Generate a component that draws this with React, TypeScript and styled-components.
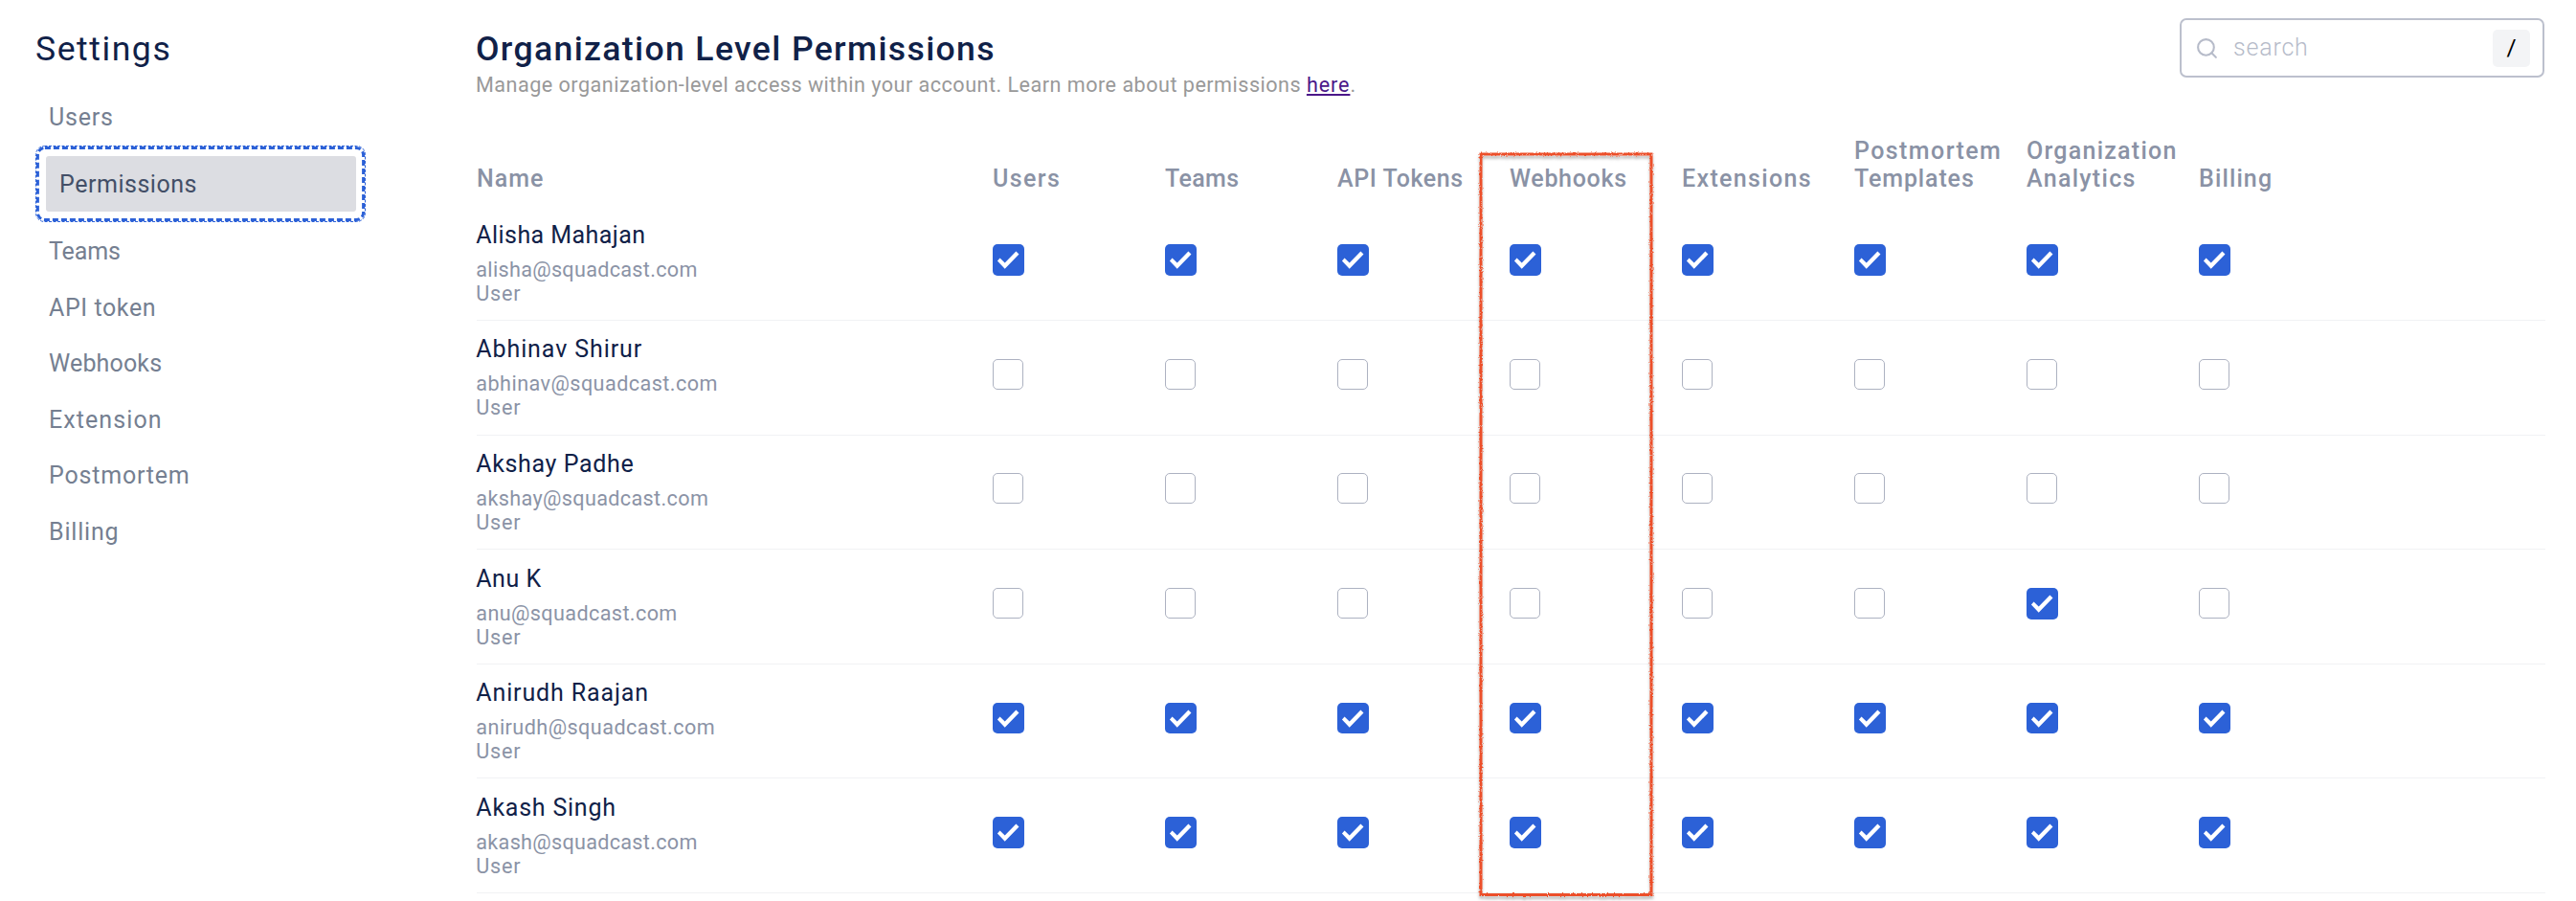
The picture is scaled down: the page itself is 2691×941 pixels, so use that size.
import React from "react";
import styled, { createGlobalStyle } from "styled-components";
import { Search } from "lucide-react";

const GlobalStyle = createGlobalStyle`
  * { box-sizing: border-box; }
  body { margin: 0; background: #fff; font-family: Roboto, "Liberation Sans", sans-serif; overflow: hidden; }
  h1, h2, p { margin: 0; }
`;

const Page = styled.div`
  display: flex;
  height: 941px;
  overflow: hidden;
`;

const Sidebar = styled.aside`
  width: 498px;
  padding: 30px 116px 0 37px;
`;

const SidebarTitle = styled.h2`
  margin-bottom: 21.3px;
  font-size: 35.6px;
  font-weight: 400;
  line-height: 42px;
  letter-spacing: 1.55px;
  color: #102148;
`;

const NavItem = styled.div<{ $tracking: number }>`
  height: 58.6px;
  padding: 0.7px 0 0 14px;
  font-size: 25px;
  line-height: 58.6px;
  letter-spacing: ${(p) => p.$tracking}px;
  color: #757f91;
`;

const ActiveFrame = styled.div`
  position: relative;
  height: 80px;
  margin-bottom: 1.4px;
  padding: 11px 10px 11px 11px;
`;

const ActiveItem = styled(NavItem)`
  height: 58px;
  border-radius: 3px;
  background: #dcdde2;
  color: #434f67;
`;

const FocusRing = styled.svg`
  position: absolute;
  inset: 0;
`;

const Main = styled.main`
  flex: 1;
  padding: 0 32px 0 0;
`;

const TopBar = styled.header`
  display: flex;
  justify-content: space-between;
  height: 102.2px;
`;

const Heading = styled.div`
  margin-left: -1px;
  padding-top: 30px;
`;

const Title = styled.h1`
  font-size: 35.6px;
  font-weight: 500;
  line-height: 42px;
  letter-spacing: 1.35px;
  color: #102148;
`;

const Subtitle = styled.p`
  margin-top: 3.2px;
  font-size: 21.6px;
  line-height: 27px;
  letter-spacing: 0.48px;
  white-space: nowrap;
  color: #999;
`;

const DocsLink = styled.a`
  letter-spacing: 0.9px;
  color: #4b1789;
  text-decoration: underline 2px;
  text-underline-offset: 2px;
`;

const SearchBox = styled.div`
  display: flex;
  align-items: center;
  width: 381px;
  height: 62px;
  margin: 19px 1px 0 0;
  padding: 0 13px 0 14px;
  border: 2px solid #bcc0cd;
  border-radius: 7px;
  color: #b6bbc9;
`;

const SearchText = styled.span`
  flex: 1;
  padding: 0 0 0 15px;
  font-size: 25px;
  font-weight: 300;
  line-height: 30px;
  letter-spacing: 0.8px;
`;

const KeyHint = styled.kbd`
  width: 39px;
  height: 39px;
  border-radius: 5px;
  background: #f3f4f6;
  font-family: inherit;
  font-size: 24.6px;
  line-height: 38px;
  text-align: center;
  color: #000;
`;

const Table = styled.section`
  position: relative;
  margin-top: 40.9px;
`;

const Row = styled.div`
  display: grid;
  grid-template-columns: 539px repeat(8, 180px);
  height: 119.6px;
  border-bottom: 1px solid #f1f2f4;
`;

const HeadRow = styled(Row)`
  align-items: end;
  height: 58px;
  margin-bottom: 14.3px;
  border: 0;
`;

const HeadCell = styled.div`
  font-size: 25px;
  font-weight: 500;
  line-height: 29px;
  color: #8a92a5;
`;

const HeadLine = styled.div<{ $tracking: number }>`
  letter-spacing: ${(p) => p.$tracking}px;
  white-space: nowrap;
`;

const Person = styled.div`
  padding-top: 15.4px;
  margin-left: -0.7px;
`;

const PersonName = styled.div<{ $tracking: number }>`
  margin-bottom: 8.1px;
  font-size: 25px;
  line-height: 30px;
  letter-spacing: ${(p) => p.$tracking}px;
  color: #102148;
`;

const PersonMeta = styled.div<{ $tracking: number }>`
  font-size: 21.6px;
  line-height: 25px;
  letter-spacing: ${(p) => p.$tracking}px;
  color: #8b93a6;
`;

const Checkbox = styled.div<{ $checked: boolean }>`
  width: ${(p) => (p.$checked ? 32.5 : 32)}px;
  height: ${(p) => (p.$checked ? 32.5 : 32)}px;
  margin-top: 39.9px;
  border: ${(p) => (p.$checked ? "0" : "1px solid #adb2c1")};
  border-radius: 5px;
  background: ${(p) => (p.$checked ? "#2c61d7" : "#fff")};

  svg { display: block; }
`;

const ColumnHighlight = styled.svg`
  position: absolute;
  left: 1039px;
  top: 8px;
  pointer-events: none;
`;

type Nav = { label: string; tracking: number; active?: boolean };

const NAV: Nav[] = [
  { label: "Users", tracking: 0.8 },
  { label: "Permissions", tracking: 0.53, active: true },
  { label: "Teams", tracking: -0.1 },
  { label: "API token", tracking: 0.6 },
  { label: "Webhooks", tracking: 0.16 },
  { label: "Extension", tracking: 1.08 },
  { label: "Postmortem", tracking: 0.8 },
  { label: "Billing", tracking: 0.82 },
];

const COLUMNS: [string, number][][] = [
  [["Name", 1.0]],
  [["Users", 1.38]],
  [["Teams", 0.36]],
  [["API Tokens", 0.58]],
  [["Webhooks", 0.68]],
  [["Extensions", 1.34]],
  [["Postmortem", 1.42], ["Templates", 0.88]],
  [["Organization", 1.25], ["Analytics", 1.3]],
  [["Billing", 1.12]],
];

const PEOPLE = [
  { name: "Alisha Mahajan", nameTracking: 0.43, email: "alisha@squadcast.com", emailTracking: 0.31, access: "11111111" },
  { name: "Abhinav Shirur", nameTracking: 0.9, email: "abhinav@squadcast.com", emailTracking: 0.45, access: "00000000" },
  { name: "Akshay Padhe", nameTracking: 0.63, email: "akshay@squadcast.com", emailTracking: 0.36, access: "00000000" },
  { name: "Anu K", nameTracking: 0.5, email: "anu@squadcast.com", emailTracking: 0.39, access: "00000010" },
  { name: "Anirudh Raajan", nameTracking: 0.86, email: "anirudh@squadcast.com", emailTracking: 0.45, access: "11111111" },
  { name: "Akash Singh", nameTracking: 0.77, email: "akash@squadcast.com", emailTracking: 0.3, access: "11111111" },
];

function CheckMark() {
  return (
    <svg width="32.5" height="32.5" viewBox="0 0 33 33">
      <path d="M5 17.7 7.7 14.8l5.2 5L24.8 7.6l3.1 3L12.9 26.2Z" fill="#fff" />
    </svg>
  );
}

function ActiveNavItem({ item }: { item: Nav }) {
  return (
    <ActiveFrame>
      <FocusRing width="345" height="80" fill="none" stroke="#2c61d7">
        <rect x="0.5" y="0.5" width="344" height="79" rx="9" strokeWidth="1" strokeDasharray="3 1.5" />
        <rect x="2.4" y="2.4" width="340.2" height="75.2" rx="7.5" strokeWidth="3" strokeDasharray="6 3" />
      </FocusRing>
      <ActiveItem $tracking={item.tracking}>{item.label}</ActiveItem>
    </ActiveFrame>
  );
}

export default function App() {
  return (
    <Page>
      <GlobalStyle />
      <Sidebar>
        <SidebarTitle>Settings</SidebarTitle>
        {NAV.map((item) =>
          item.active ? (
            <ActiveNavItem key={item.label} item={item} />
          ) : (
            <NavItem key={item.label} $tracking={item.tracking}>{item.label}</NavItem>
          ),
        )}
      </Sidebar>
      <Main>
        <TopBar>
          <Heading>
            <Title>Organization Level Permissions</Title>
            <Subtitle>
              Manage organization-level access within your account. Learn more about permissions{" "}
              <DocsLink href="#">here</DocsLink>.
            </Subtitle>
          </Heading>
          <SearchBox>
            <Search size={25} strokeWidth={2} />
            <SearchText>search</SearchText>
            <KeyHint>/</KeyHint>
          </SearchBox>
        </TopBar>
        <Table>
          <HeadRow>
            {COLUMNS.map((lines) => (
              <HeadCell key={lines[0][0]}>
                {lines.map(([text, tracking]) => (
                  <HeadLine key={text} $tracking={tracking}>{text}</HeadLine>
                ))}
              </HeadCell>
            ))}
          </HeadRow>
          {PEOPLE.map((person) => (
            <Row key={person.email}>
              <Person>
                <PersonName $tracking={person.nameTracking}>{person.name}</PersonName>
                <PersonMeta $tracking={person.emailTracking}>{person.email}</PersonMeta>
                <PersonMeta $tracking={0.8}>User</PersonMeta>
              </Person>
              {[...person.access].map((flag, i) => (
                <Checkbox key={i} $checked={flag === "1"}>{flag === "1" && <CheckMark />}</Checkbox>
              ))}
            </Row>
          ))}
          <ColumnHighlight width="198" height="794">
            <defs>
              <filter id="chalk" filterUnits="userSpaceOnUse" x="0" y="0" width="198" height="794">
                <feTurbulence type="fractalNoise" baseFrequency="0.6" numOctaves="2" seed="4" result="noise" />
                <feDisplacementMap in="SourceGraphic" in2="noise" scale="3" xChannelSelector="R" yChannelSelector="G" result="rough" />
                <feDropShadow in="rough" dx="0" dy="3" stdDeviation="1.6" floodColor="#000" floodOpacity="0.28" />
              </filter>
            </defs>
            <rect x="10" y="10" width="178" height="773.5" fill="none" stroke="#ec4f2c" strokeWidth="3" filter="url(#chalk)" />
          </ColumnHighlight>
        </Table>
      </Main>
    </Page>
  );
}
